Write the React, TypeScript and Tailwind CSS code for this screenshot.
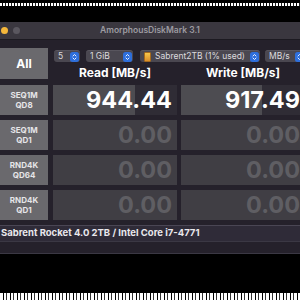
import React from 'react';

const font = { fontFamily: 'Inter, "Liberation Sans", sans-serif' };

interface SelectProps {
  width: string;
  label: string;
  icon?: boolean;
}

const Stepper = () => (
  <div className="w-[9px] h-[10px] shrink-0 rounded-[2.5px] bg-[#2e6fdc] flex items-center justify-center">
    <svg width="5" height="8" viewBox="0 0 5 8" fill="none">
      <path d="M1 3L2.5 1.5L4 3" stroke="white" strokeWidth="0.9" strokeLinecap="round" strokeLinejoin="round" />
      <path d="M1 5L2.5 6.5L4 5" stroke="white" strokeWidth="0.9" strokeLinecap="round" strokeLinejoin="round" />
    </svg>
  </div>
);

const Select: React.FC<SelectProps> = ({ width, label, icon }) => (
  <div className={`${width} shrink-0 h-[12px] rounded-[3px] bg-[#4a4750] border-t border-[#58555e] flex items-center pl-[4px] pr-[1px] gap-[4px]`}>
    {icon && (
      <div className="w-[7px] h-[10px] shrink-0 rounded-[1px] bg-gradient-to-b from-[#f6c64a] to-[#d98e2a] border border-[#a56a1d]" />
    )}
    <span className="flex-1 text-[8.5px] leading-none text-[#dcdade] truncate">{label}</span>
    <Stepper />
  </div>
);

interface RowProps {
  test: string;
  qd: string;
  read: string;
  write: string;
  readPct?: number;
  writePct?: number;
}

const ValueBox: React.FC<{ value: string; pct?: number }> = ({ value, pct }) => {
  const active = pct !== undefined;
  return (
    <div className={`w-[124px] shrink-0 h-[30px] relative ${active ? 'bg-[#2f2c35]' : 'bg-[#403e44]'}`}>
      {active && <div className="absolute left-0 top-0 bottom-0 bg-[#4d4c51]" style={{ width: `${pct}%` }} />}
      <div className="relative h-full flex items-center justify-end pr-[5px]">
        <span className={`text-[23.5px] font-bold leading-none ${active ? 'text-white' : 'text-[#5f5e63]'}`}>
          {value}
        </span>
      </div>
    </div>
  );
};

const Row: React.FC<RowProps> = ({ test, qd, read, write, readPct, writePct }) => (
  <div className="flex mt-[5px] gap-[5px]">
    <div className="w-[48px] shrink-0 h-[30px] bg-[#6a696d] flex flex-col items-center justify-center text-[8px] font-bold leading-[10px] text-[#e6e5e8]">
      <span>{test}</span>
      <span>{qd}</span>
    </div>
    <ValueBox value={read} pct={readPct} />
    <div className="-ml-[1px]">
      <ValueBox value={write} pct={writePct} />
    </div>
  </div>
);

export default function App() {
  return (
    <div className="w-[300px] h-[300px] bg-black overflow-hidden flex flex-col" style={font}>
      <div className="mt-[3px] h-[3px] bg-[repeating-linear-gradient(90deg,#fff_0_2px,#000_2px_3px,#fff_3px_5px,#222_5px_6px)]" />

      <div className="mt-[16px] w-[300px] overflow-hidden flex flex-col">
        {/* title bar */}
        <div className="h-[18px] bg-[#3a373f] border-b border-[#1c1a21] relative flex items-center justify-center">
          <div className="absolute left-[1px] top-[5px] flex gap-[5px]">
            <div className="w-[7px] h-[7px] rounded-full bg-[#f4b73b]" />
            <div className="w-[7px] h-[7px] rounded-full bg-[#5a575f]" />
          </div>
          <span className="text-[8.5px] font-semibold text-[#9d9ba1]">AmorphousDiskMark 3.1</span>
        </div>

        {/* body */}
        <div className="bg-[#25212b] pt-[8px] flex flex-col">
          <div className="flex">
            <div className="w-[48px] shrink-0 h-[31px] bg-[#6a696d] flex items-center justify-center text-[12px] font-bold text-white">
              All
            </div>
            <div className="ml-[6px] flex flex-col shrink-0">
              <div className="flex mt-[2px] gap-[6px]">
                <Select width="w-[26px]" label="5" />
                <Select width="w-[47px]" label="1 GiB" />
                <div className="ml-[1px]">
                  <Select width="w-[120px]" label="Sabrent2TB (1% used)" icon />
                </div>
                <div className="-ml-[1px]">
                  <Select width="w-[40px]" label="MB/s" />
                </div>
              </div>
              <div className="flex mt-[5px] -ml-[1px] h-[12px] items-center text-[12px] font-bold text-white">
                <div className="w-[124px] shrink-0 text-center">Read [MB/s]</div>
                <div className="w-[124px] shrink-0 ml-[4px] text-center">Write [MB/s]</div>
              </div>
            </div>
          </div>

          <div className="mt-[1px] flex flex-col">
            <Row test="SEQ1M" qd="QD8" read="944.44" write="917.49" readPct={66} writePct={65} />
            <Row test="SEQ1M" qd="QD1" read="0.00" write="0.00" />
            <Row test="RND4K" qd="QD64" read="0.00" write="0.00" />
            <Row test="RND4K" qd="QD1" read="0.00" write="0.00" />
          </div>

          <div className="mt-[5px] h-[17px] bg-[#2f2b38] border-t border-[#4a4654] border-b border-b-[#3b3844] flex items-center pl-[1px]">
            <span className="text-[9.5px] font-bold text-[#e9e7ec] whitespace-nowrap">
              Sabrent Rocket 4.0 2TB / Intel Core i7-4771
            </span>
          </div>
          <div className="h-[12px] border-b border-[#3b3844]" />
        </div>
      </div>

      <div className="mt-auto h-[7px] bg-[repeating-linear-gradient(90deg,#fff_0_3px,#000_3px_4px,#fff_4px_6px,#333_6px_7px)]" />
    </div>
  );
}
